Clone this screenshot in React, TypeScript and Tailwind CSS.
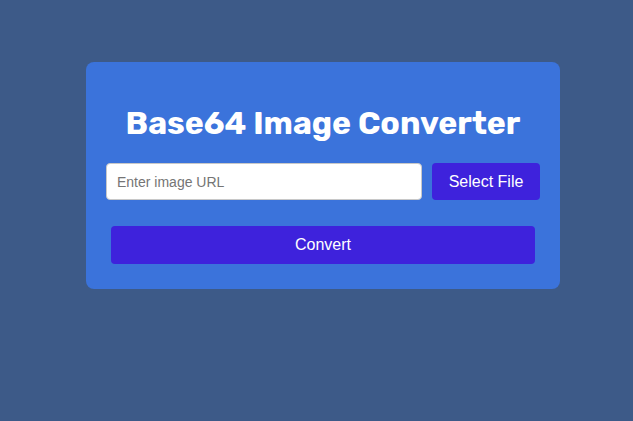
import React, { useState } from 'react'

export default function App() {
  const [url, setUrl] = useState('')

  return (
    <div className="min-h-screen w-full bg-[#3d5a88] pt-[62px] font-['Liberation_Sans',Arial,sans-serif]">
      <div className="ml-[86px] flex h-[227px] w-[474px] flex-col rounded-lg bg-[#3b73db] px-5 pt-[41px]">
        <h1 className="h-[40px] text-center font-['Rubik','Inter',sans-serif] text-[32px] leading-[40px] font-bold text-white">
          Base64 Image Converter
        </h1>

        <div className="mt-[20px] flex gap-[10px]">
          <input
            type="text"
            value={url}
            onChange={(e) => setUrl(e.target.value)}
            placeholder="Enter image URL"
            className="h-[37px] flex-1 rounded border border-[#c8c8c8] bg-white px-[10px] text-[14px] text-gray-800 placeholder:text-[#757575] outline-none"
          />
          <button
            type="button"
            className="h-[37px] w-[108px] rounded bg-[#3e22dc] text-[16px] text-white"
          >
            Select File
          </button>
        </div>

        <button
          type="button"
          className="mx-[5px] mt-[26px] h-[38px] rounded bg-[#3e22dc] text-[16px] text-white"
        >
          Convert
        </button>
      </div>
    </div>
  )
}
